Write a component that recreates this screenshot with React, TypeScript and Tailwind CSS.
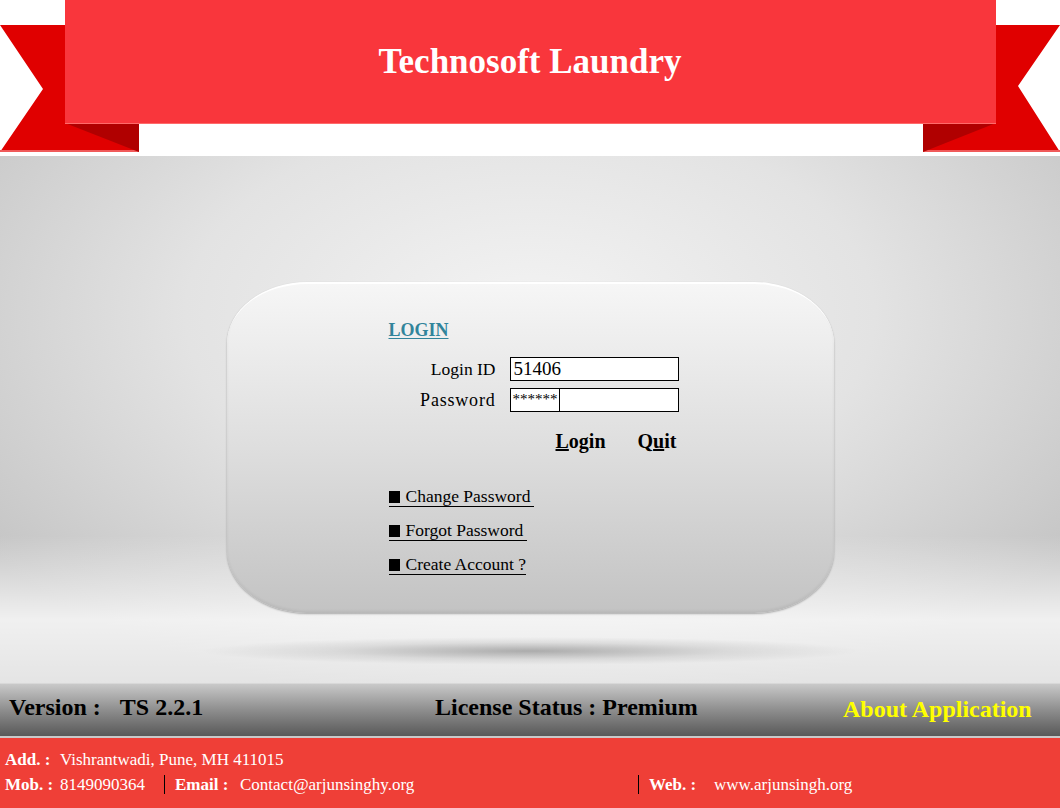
const serif = { fontFamily: '"Liberation Serif", "Times New Roman", serif' };

const RibbonTails = () => (
  <svg
    className="absolute inset-0"
    width="1060"
    height="156"
    viewBox="0 0 1060 156"
    aria-hidden="true"
  >
    <polygon points="0,25 139,25 139,152 0,152 43,89" fill="#e00000" />
    <rect x="0" y="150" width="139" height="2" fill="#f05a5a" />
    <polygon points="65,123 139,123 139,152" fill="#b00000" />
    <polygon points="923,25 1060,25 1018,86 1060,152 923,152" fill="#e00000" />
    <rect x="923" y="150" width="137" height="2" fill="#f05a5a" />
    <polygon points="923,123 996,123 923,152" fill="#b00000" />
  </svg>
);

const LinkItem = ({ label, trail }: { label: string; trail: string }) => (
  <a
    href="#"
    className={`inline-flex items-center h-[21px] gap-[6px] border-b border-black text-[17.5px] leading-[20px] text-black ${trail}`}
  >
    <span className="w-[11px] h-[12px] bg-black mt-[2px]" />
    <span>{label}</span>
  </a>
);

const App = () => {
  return (
    <div className="w-[1060px] h-[808px] overflow-hidden bg-white" style={serif}>
      {/* header ribbon */}
      <header className="relative h-[156px] bg-white">
        <RibbonTails />
        <div className="relative mx-auto w-[931px] h-[124px] bg-[#f9363c] border-b border-[#ff6a6a] flex items-center justify-center">
          <h1 className="text-[35px] font-bold text-white mt-[2px]">Technosoft Laundry</h1>
        </div>
      </header>

      {/* main stage */}
      <main className="h-[527px] flex flex-col items-center pt-[126px] bg-[linear-gradient(to_bottom,transparent_72%,rgba(255,255,255,0.75)_88%,rgba(255,255,255,0.55)_100%),radial-gradient(ellipse_65%_75%_at_50%_30%,#f3f3f3_0%,#e3e3e3_50%,#c4c4c4_100%)]">
        <section className="w-[607px] h-[331px] rounded-[80px_/_62px] bg-gradient-to-b from-[#f6f6f6] via-[#dedede] to-[#c3c3c3] border-t-2 border-white shadow-[0_1px_2px_rgba(0,0,0,0.3),inset_0_-2px_3px_rgba(0,0,0,0.06)] pl-[162px] pt-[34px]">
          <h2 className="text-[18px] leading-6 font-bold text-[#31849b] underline underline-offset-2">
            LOGIN
          </h2>

          <div className="mt-[15px] grid grid-cols-[107px_169px] gap-x-[14px] gap-y-[7px] items-center">
            <label className="text-right text-[17.5px] leading-6">Login ID</label>
            <div className="h-[24px] border border-black bg-white pl-[3px] text-[19px] leading-[22px]">
              51406
            </div>
            <label className="text-right text-[18px] leading-6 tracking-[0.8px]">Password</label>
            <div className="h-[24px] border border-black bg-white pl-[2px] flex items-start">
              <span className="text-[15px] leading-[20px] pr-[1px] border-r border-black h-full">
                ******
              </span>
            </div>
          </div>

          <div className="mt-[17px] pl-[167px] flex gap-[32px] text-[20px] leading-6 font-bold">
            <span>
              <span className="underline">L</span>ogin
            </span>
            <span>
              Q<span className="underline">u</span>it
            </span>
          </div>

          <div className="mt-[33px] flex flex-col gap-[13px] items-start">
            <LinkItem label="Change Password" trail="pr-[4px]" />
            <LinkItem label="Forgot Password" trail="pr-[4px]" />
            <LinkItem label="Create Account ?" trail="pr-0" />
          </div>
        </section>
        <div className="mt-[18px] w-[660px] h-[40px] bg-[radial-gradient(ellipse_50%_35%_at_50%_50%,rgba(0,0,0,0.28),rgba(0,0,0,0.08)_60%,transparent_100%)]" />
      </main>

      {/* status bar */}
      <div className="h-[53px] border-t border-[#d8d8d8] bg-gradient-to-b from-[#c9c9c9] via-[#8e8e8e] to-[#595959] flex items-center text-[24px] font-bold pl-[9px] pb-[6px]">
        <div className="w-[426px] flex">
          <span>Version :</span>
          <span className="ml-[19px]">TS 2.2.1</span>
        </div>
        <div className="w-[408px]">License Status : Premium</div>
        <div className="text-[#ffff00] mt-[3px]">About Application</div>
      </div>

      {/* contact footer */}
      <footer className="h-[72px] border-t-2 border-[#c9c9c9] bg-[#ef3f37] text-white text-[17px] leading-[25px] pl-[5px] pt-[9px]">
        <div className="flex">
          <span className="w-[55px] font-bold">Add. :</span>
          <span>Vishrantwadi, Pune, MH 411015</span>
        </div>
        <div className="flex items-center">
          <span className="w-[55px] font-bold">Mob. :</span>
          <span className="w-[104px]">8149090364</span>
          <span className="w-px h-[19px] bg-black" />
          <span className="ml-[10px] w-[65px] font-bold">Email :</span>
          <span className="w-[398px]">Contact@arjunsinghy.org</span>
          <span className="w-px h-[19px] bg-black" />
          <span className="ml-[10px] w-[65px] font-bold">Web. :</span>
          <span>www.arjunsingh.org</span>
        </div>
      </footer>
    </div>
  );
};

export default App;
